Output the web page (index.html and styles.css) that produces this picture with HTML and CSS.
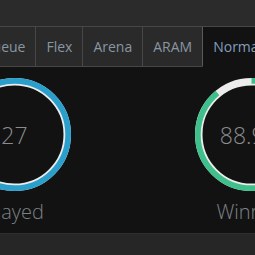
FILE: index.html
```html
<!DOCTYPE html>
<html lang="en">
<head>
    <meta charset="UTF-8">
    <meta name="viewport" content="width=device-width, initial-scale=1.0">
    <title>Queue Stats</title>
    <link rel="stylesheet" href="styles.css">
</head>
<body>

    <div class="page">
        <!-- Queue Tabs -->
        <div class="tabs">
            <div class="tab">Solo Queue</div>
            <div class="tab">Flex</div>
            <div class="tab">Arena</div>
            <div class="tab">ARAM</div>
            <div class="tab active">Normal</div>
        </div>

        <!-- Stat Rings -->
        <div class="stats">
            <div class="stat">
                <div class="ring">
                    <svg viewBox="0 0 113 113" width="113" height="113">
                        <circle class="track" cx="56.5" cy="56.5" r="52.75"></circle>
                        <circle class="arc blue" cx="56.5" cy="56.5" r="53.65"
                                stroke-dasharray="337.1 337.1" transform="rotate(-90 56.5 56.5)"></circle>
                    </svg>
                    <span class="value">27</span>
                </div>
                <div class="label">Played</div>
            </div>

            <div class="stat">
                <div class="ring">
                    <svg viewBox="0 0 113 113" width="113" height="113">
                        <circle class="track" cx="56.5" cy="56.5" r="52.75"></circle>
                        <circle class="arc green" cx="56.5" cy="56.5" r="53.65"
                                stroke-dasharray="299.7 337.1" transform="rotate(-90 56.5 56.5)"></circle>
                    </svg>
                    <span class="value">88.9%</span>
                </div>
                <div class="label">Winrate</div>
            </div>
        </div>

        <div class="footer"></div>
    </div>

</body>
</html>
```

FILE: styles.css
```css
/* General Styles */
body {
    font-family: 'Open Sans', 'Liberation Sans', sans-serif;
    background: #2b2b2b;
    margin: 0;
    overflow: hidden;
}

.page {
    padding-top: 26px;
}

/* Tabs */
.tabs {
    display: flex;
    margin-left: -61px;
    border-top: 1px solid #474747;
}

.tab {
    padding: 10px;
    font-size: 14px;
    line-height: 19px;
    color: #8896a2;
    background: #2a2a2a;
    border-left: 1px solid #474747;
    border-bottom: 1px solid #474747;
    white-space: nowrap;
}

.tab.active {
    background: #121212;
    color: #819fbe;
    border-left-color: #5a5a5a;
    border-bottom-color: #121212;
}

/* Stats */
.stats {
    display: flex;
    margin-left: -104px;
    padding: 11px 0 8px;
    background: #121212;
}

.stat {
    width: 237px;
    flex-shrink: 0;
    display: flex;
    flex-direction: column;
    align-items: center;
}

.ring {
    display: grid;
    place-items: center;
    width: 113px;
    height: 113px;
}

.ring svg,
.ring .value {
    grid-area: 1 / 1;
}

.track {
    fill: none;
    stroke: #ececec;
    stroke-width: 7.5;
}

.arc {
    fill: none;
    stroke-width: 5.7;
}

.arc.blue {
    stroke: #2b9fcc;
}

.arc.green {
    stroke: #3fbf8c;
}

.value {
    font-size: 23px;
    font-weight: 300;
    color: #8a8d90;
}

.label {
    margin-top: 7px;
    font-size: 20px;
    font-weight: 300;
    color: #7d8288;
}

.footer {
    height: 40px;
    background: #262626;
    border-top: 1px solid #2e2e2e;
}
```
